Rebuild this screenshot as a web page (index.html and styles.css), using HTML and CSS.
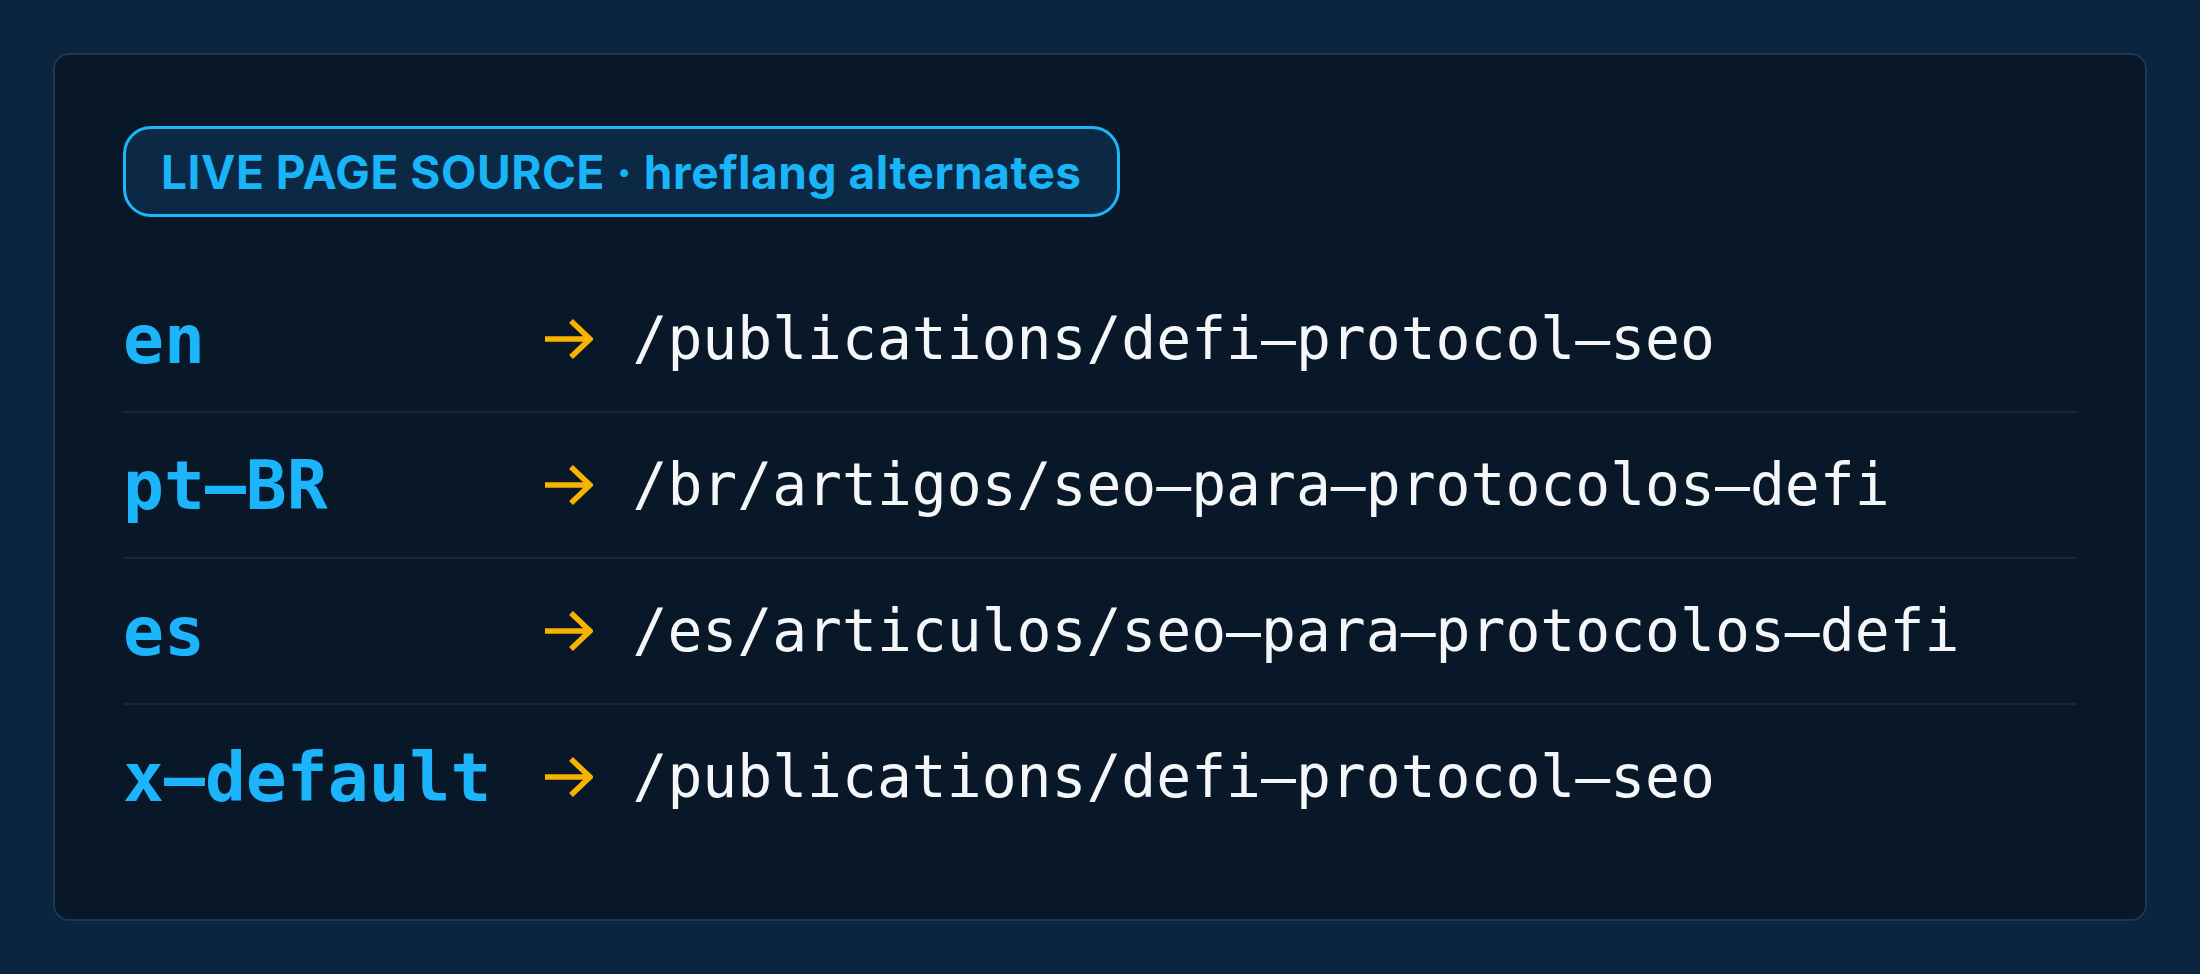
FILE: index.html
```html
<!DOCTYPE html>
<html lang="en">
<head>
<meta charset="utf-8">
<title>hreflang alternates</title>
<link rel="stylesheet" href="styles.css">
</head>
<body>
<main class="card">
  <div class="badge">LIVE PAGE SOURCE · hreflang alternates</div>
  <div class="rows">
    <div class="row">
      <span class="key">en</span>
      <span class="arrow"><svg class="arrow-icon" viewBox="0 0 48 42" aria-hidden="true"><path d="M0 21H45M26 3L45 21L26 39"/></svg></span>
      <span class="path">/publications/defi–protocol–seo</span>
    </div>
    <div class="row">
      <span class="key">pt–BR</span>
      <span class="arrow"><svg class="arrow-icon" viewBox="0 0 48 42" aria-hidden="true"><path d="M0 21H45M26 3L45 21L26 39"/></svg></span>
      <span class="path">/br/artigos/seo–para–protocolos–defi</span>
    </div>
    <div class="row">
      <span class="key">es</span>
      <span class="arrow"><svg class="arrow-icon" viewBox="0 0 48 42" aria-hidden="true"><path d="M0 21H45M26 3L45 21L26 39"/></svg></span>
      <span class="path">/es/articulos/seo–para–protocolos–defi</span>
    </div>
    <div class="row">
      <span class="key">x–default</span>
      <span class="arrow"><svg class="arrow-icon" viewBox="0 0 48 42" aria-hidden="true"><path d="M0 21H45M26 3L45 21L26 39"/></svg></span>
      <span class="path">/publications/defi–protocol–seo</span>
    </div>
  </div>
</main>
</body>
</html>
```
FILE: styles.css
```css
html, body {
  margin: 0;
  padding: 0;
}
body {
  background: #0b2440;
  padding: 53px;
  height: 974px;
  box-sizing: border-box;
  font-family: "DejaVu Sans Mono", monospace;
}
.card {
  background: #081828;
  border: 2px solid #1c3854;
  border-radius: 16px;
  padding: 71px 68px 70px 68px;
  display: flex;
  flex-direction: column;
  align-items: flex-start;
}
.badge {
  box-sizing: border-box;
  height: 91px;
  display: flex;
  align-items: center;
  padding: 0 35px 0 35px;
  border: 3px solid #1cb6fa;
  border-radius: 28px;
  background: #0b2945;
  color: #1ab4f8;
  font-family: "Inter", "Liberation Sans", sans-serif;
  font-weight: 700;
  font-size: 46px;
  letter-spacing: 0.55px;
}
.rows {
  margin-top: 50px;
  align-self: stretch;
  display: grid;
  grid-template-columns: max-content max-content 1fr;
}
.row {
  display: contents;
}
.row > span {
  height: 144px;
  display: flex;
  align-items: center;
  border-bottom: 2px solid #17283a;
}
.row:last-child > span {
  border-bottom: none;
}
.key {
  color: #1cb4fa;
  font-weight: 700;
  font-size: 68px;
  padding-right: 54px;
}
.arrow {
  padding-right: 39px;
}
.arrow-icon {
  width: 48px;
  height: 42px;
  fill: none;
  stroke: #f7b300;
  stroke-width: 5.5;
  stroke-linecap: butt;
  stroke-linejoin: miter;
}
.path {
  color: #f4f6f8;
  font-size: 58px;
}
```
